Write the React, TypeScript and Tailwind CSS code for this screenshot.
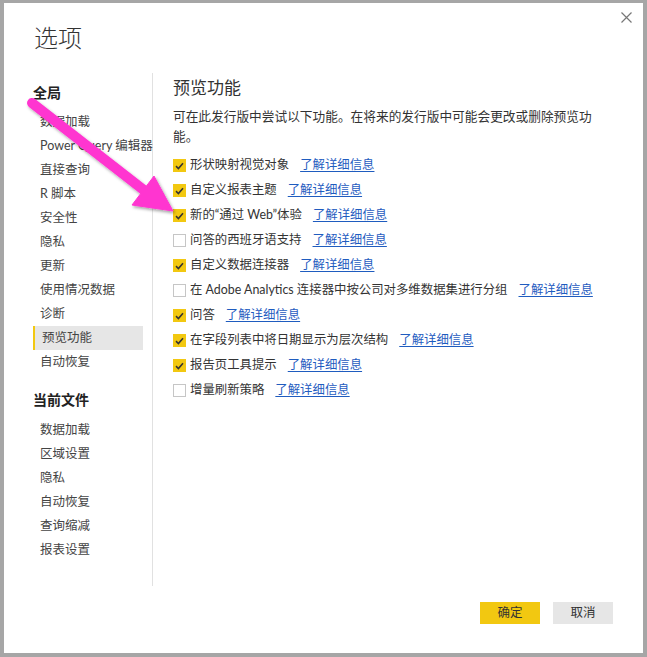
import React from "react";

/* ── Data ─────────────────────────────────────────────────────────── */

const GLOBAL_ITEMS = [
  "数据加载",
  "Power Query 编辑器",
  "直接查询",
  "R 脚本",
  "安全性",
  "隐私",
  "更新",
  "使用情况数据",
  "诊断",
  "预览功能",
  "自动恢复",
];

const FILE_ITEMS = ["数据加载", "区域设置", "隐私", "自动恢复", "查询缩减", "报表设置"];

const FEATURES = [
  { label: "形状映射视觉对象", on: true },
  { label: "自定义报表主题", on: true },
  { label: "新的“通过 Web”体验", on: true },
  { label: "问答的西班牙语支持", on: false },
  { label: "自定义数据连接器", on: true },
  { label: "在 Adobe Analytics 连接器中按公司对多维数据集进行分组", on: false },
  { label: "问答", on: true },
  { label: "在字段列表中将日期显示为层次结构", on: true },
  { label: "报告页工具提示", on: true },
  { label: "增量刷新策略", on: false },
];

const FONT = { fontFamily: 'Lato, "Noto Sans CJK SC", sans-serif' };

/* ── Pieces ───────────────────────────────────────────────────────── */

function Checkbox({ on }: { on: boolean }) {
  if (!on) {
    return <span className="h-[13px] w-[13px] shrink-0 border border-[#c6c6c6] bg-white" />;
  }
  return (
    <span className="flex h-[13px] w-[13px] shrink-0 items-center justify-center bg-[#f2c811]">
      <svg width="9" height="8" viewBox="0 0 9 8">
        <path d="M1 4.2 L3.4 6.5 L8 1.3" fill="none" stroke="#333" strokeWidth="1.6" />
      </svg>
    </span>
  );
}

function NavItem({ label, active }: { label: string; active?: boolean }) {
  return (
    <div
      className={`ml-[29px] flex h-6 w-[110px] items-center whitespace-nowrap pl-[7px] text-[12.5px] text-[#444] ${
        active ? "border-l-2 border-[#f2c811] bg-[#e6e6e6] pl-[5px]" : ""
      }`}
    >
      {label}
    </div>
  );
}

function PinkArrow() {
  return (
    <svg
      className="pointer-events-none absolute left-0 top-0"
      width="200"
      height="230"
      viewBox="0 0 200 230"
    >
      <defs>
        <filter id="sh" x="-20%" y="-20%" width="140%" height="140%">
          <feDropShadow dx="1.5" dy="2" stdDeviation="1.5" floodColor="#000" floodOpacity="0.35" />
        </filter>
      </defs>
      <g filter="url(#sh)" fill="#ff36d0" stroke="#ff36d0">
        <line x1="28" y1="100" x2="141" y2="188" strokeWidth="10" strokeLinecap="round" />
        <polygon points="150,173 128,202 169,208" strokeWidth="1" strokeLinejoin="round" />
      </g>
    </svg>
  );
}

/* ── Component ───────────────────────────────────────────────────── */

export default function App() {
  return (
    <div className="h-[657px] w-[647px] bg-[#a6a6a6] pb-[4px] pl-[4px] pr-[4px] pt-[3px]" style={FONT}>
      <div className="relative flex h-full w-full flex-col bg-white">
        {/* title row */}
        <div className="flex h-[70px] justify-between">
          <h1 className="ml-[30px] mt-[19px] text-[24px] font-light leading-8 text-[#333]">选项</h1>
          <svg className="mr-[11px] mt-[9px]" width="11" height="11" viewBox="0 0 11 11">
            <path d="M0.5 0.5 L10.5 10.5 M10.5 0.5 L0.5 10.5" stroke="#777" strokeWidth="1.2" />
          </svg>
        </div>

        {/* body */}
        <div className="flex h-[513px]">
          <nav className="w-[149px] shrink-0 border-r border-[#e1e1e1] pt-[7px]">
            <div className="ml-[29px] flex h-6 items-center text-[14px] font-bold text-[#222]">全局</div>
            <div className="mt-[6px]">
              {GLOBAL_ITEMS.map((it) => (
                <NavItem key={it} label={it} active={it === "预览功能"} />
              ))}
            </div>
            <div className="ml-[29px] mt-[13px] flex h-6 items-center text-[14px] font-bold text-[#222]">
              当前文件
            </div>
            <div className="mt-[7px]">
              {FILE_ITEMS.map((it) => (
                <NavItem key={it} label={it} />
              ))}
            </div>
          </nav>

          <section className="w-[450px] pl-[20px] pt-[3px]">
            <h2 className="flex h-6 items-center text-[17px] text-[#333]">预览功能</h2>
            <p className="mt-[6px] w-[436px] text-[12.7px] leading-5 text-[#333]">
              可在此发行版中尝试以下功能。在将来的发行版中可能会更改或删除预览功能。
            </p>
            <ul className="mt-[7px]">
              {FEATURES.map((f) => (
                <li key={f.label} className="flex h-[25px] items-center whitespace-nowrap text-[12.4px]">
                  <Checkbox on={f.on} />
                  <span className="ml-[4px] text-[#333]">{f.label}</span>
                  <a className="ml-[11px] cursor-pointer text-[#1f5cbf] underline underline-offset-2">
                    了解详细信息
                  </a>
                </li>
              ))}
            </ul>
          </section>
        </div>

        {/* footer */}
        <div className="flex justify-end gap-[13px] pr-[30px] pt-[16px]">
          <button className="h-[22px] w-[60px] bg-[#f2c811] text-[12.5px] text-[#333]">确定</button>
          <button className="h-[22px] w-[60px] bg-[#e6e6e6] text-[12.5px] text-[#333]">取消</button>
        </div>

        <PinkArrow />
      </div>
    </div>
  );
}
